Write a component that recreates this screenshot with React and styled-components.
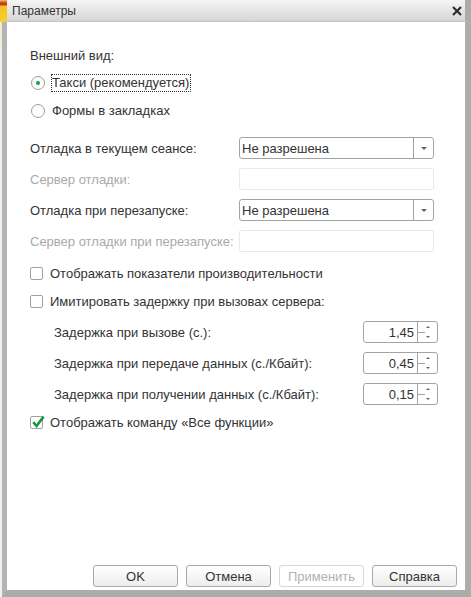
import React from 'react';
import styled, { createGlobalStyle } from 'styled-components';

const Global = createGlobalStyle`
  html, body { margin: 0; padding: 0; }
  body {
    width: 471px; height: 597px; overflow: hidden; background: #fff;
    font-family: "Liberation Sans", Arial, sans-serif; font-size: 13px; color: #333;
  }
  * { box-sizing: border-box; }
`;

const Screen = styled.div`
  width: 471px; height: 597px; display: flex; flex-direction: column;
`;
const TitleRow = styled.div`
  display: flex; height: 22px; flex: none;
`;
const DesktopPeek = styled.div`
  width: 7px;
  background: linear-gradient(180deg, #e9d046 0, #c9362a 3px, #c9362a 5px, #f3c41c 6px, #f6cf34 100%);
`;
const TitleBar = styled.div`
  flex: 1; display: flex; align-items: center; justify-content: space-between;
  padding: 0 3px 0 5px;
  background: linear-gradient(#f6f6f6, #d5d5d5);
  border-bottom: 1px solid #c4c4c4;
  border-right: 6px solid #acacac;
  font-size: 12px; color: #333;
`;
const CloseIcon = styled.svg`
  width: 10px; height: 10px; display: block;
`;
const BodyRow = styled.div`
  flex: 1; display: flex; min-height: 0;
`;
const Gutter = styled.div`
  width: 2px; background: linear-gradient(#f3e9c8, #f1f1f1 40px, #f1f1f1);
`;
const Window = styled.div`
  flex: 1; display: flex; flex-direction: column;
  background: #fff;
  border-left: 5px solid #b4b4b4;
  border-right: 6px solid #acacac;
  border-bottom: 7px solid #acacac;
  padding: 19px 8px 3px 23px;
`;
const Heading = styled.div`
  height: 28px; display: flex; align-items: center;
`;
const RadioRow = styled.div`
  height: 28px; display: flex; align-items: center; gap: 6px; padding-left: 1px;
`;
const RadioCircle = styled.span`
  width: 14px; height: 14px; border-radius: 50%;
  border: 1px solid #9e9e9e;
  background: linear-gradient(#fafafa, #fff);
  display: grid; place-items: center;
`;
const RadioDot = styled.span`
  width: 4px; height: 4px; border-radius: 50%; background: #1f9a48;
`;
const RadioLabel = styled.span`
  line-height: 16px; padding: 0 1px 0 0;
  border: 1px dotted ${p => (p.$focused ? '#333' : 'transparent')};
`;
const FieldsGrid = styled.div`
  margin-top: 12px;
  display: grid; grid-template-columns: 209px 195px;
  grid-auto-rows: 22px; row-gap: 9px; align-items: center;
`;
const FieldLabel = styled.span`
  color: ${p => (p.$muted ? '#a9a9a9' : '#333')};
`;
const Select = styled.div`
  height: 22px; display: flex; border: 1px solid #a4a4a4; border-radius: 3px;
`;
const SelectValue = styled.span`
  flex: 1; display: flex; align-items: center; padding-left: 2px;
`;
const SelectButton = styled.span`
  width: 20px; border-left: 1px solid #a4a4a4;
  display: grid; place-items: center;
  &::after {
    content: ''; border-left: 3px solid transparent; border-right: 3px solid transparent;
    border-top: 3px solid #666;
  }
`;
const TextInput = styled.div`
  height: 22px; border: 1px solid #e9e9e9; border-radius: 2px;
`;
const CheckRow = styled.div`
  height: 28px; display: flex; align-items: center; gap: 7px;
  margin-top: ${p => p.$mt || 0}px;
`;
const CheckBox = styled.span`
  position: relative; width: 13px; height: 13px;
  border: 1px solid #a0a0a0; border-radius: 2px; background: #fff;
`;
const CheckMark = styled.svg`
  position: absolute; left: 0px; top: -3px; width: 15px; height: 15px; overflow: visible;
`;
const DelayList = styled.div`
  margin-top: 6px; width: 408px; padding-left: 24px;
  display: grid; grid-auto-rows: 22px; row-gap: 9px;
`;
const DelayRow = styled.div`
  display: flex; align-items: center; justify-content: space-between;
`;
const Spinner = styled.div`
  width: 75px; height: 22px; display: flex;
  border: 1px solid #a4a4a4; border-radius: 3px;
`;
const SpinValue = styled.span`
  flex: 1; display: flex; align-items: center; justify-content: flex-end; padding-right: 3px;
`;
const SpinButtons = styled.span`
  position: relative; width: 20px; border-left: 1px solid #a4a4a4;
  display: flex; flex-direction: column;
  &::before {
    content: ''; position: absolute; left: 0; top: 50%; width: 7px; height: 1px; background: #a4a4a4;
  }
`;
const SpinArrow = styled.span`
  flex: 1; display: grid; place-items: center;
  &::after {
    content: ''; border-left: 2px solid transparent; border-right: 2px solid transparent;
    ${p => (p.$up ? 'border-bottom: 2px solid #666;' : 'border-top: 2px solid #666;')}
  }
`;
const Spacer = styled.div`
  flex: 1;
`;
const ButtonBar = styled.div`
  display: flex; justify-content: flex-end; gap: 8px;
`;
const Button = styled.button`
  width: 85px; height: 22px; padding: 0;
  font-family: "Liberation Sans", Arial, sans-serif; font-size: 13px;
  color: ${p => (p.disabled ? '#b2b2b2' : '#333')};
  border: 1px solid ${p => (p.disabled ? '#d8d8d8' : '#a9a9a9')};
  border-radius: 3px;
  background: ${p => (p.disabled ? '#fff' : 'linear-gradient(#ffffff, #ededed)')};
`;

const fields = [
  { label: 'Отладка в текущем сеансе:', select: 'Не разрешена' },
  { label: 'Сервер отладки:', muted: true },
  { label: 'Отладка при перезапуске:', select: 'Не разрешена' },
  { label: 'Сервер отладки при перезапуске:', muted: true },
];

const delays = [
  { label: 'Задержка при вызове (с.):', value: '1,45' },
  { label: 'Задержка при передаче данных (с./Кбайт):', value: '0,45' },
  { label: 'Задержка при получении данных (с./Кбайт):', value: '0,15' },
];

export default function App() {
  return (
    <Screen>
      <Global />
      <TitleRow>
        <DesktopPeek />
        <TitleBar>
          <span>Параметры</span>
          <CloseIcon viewBox="0 0 10 10">
            <path d="M1 1 L9 9 M9 1 L1 9" stroke="#2e2e2e" strokeWidth="2.2" fill="none" />
          </CloseIcon>
        </TitleBar>
      </TitleRow>
      <BodyRow>
        <Gutter />
        <Window>
          <Heading>Внешний вид:</Heading>
          <RadioRow>
            <RadioCircle><RadioDot /></RadioCircle>
            <RadioLabel $focused>Такси (рекомендуется)</RadioLabel>
          </RadioRow>
          <RadioRow>
            <RadioCircle />
            <RadioLabel>Формы в закладках</RadioLabel>
          </RadioRow>
          <FieldsGrid>
            {fields.map(f => (
              <React.Fragment key={f.label}>
                <FieldLabel $muted={f.muted}>{f.label}</FieldLabel>
                {f.select ? (
                  <Select>
                    <SelectValue>{f.select}</SelectValue>
                    <SelectButton />
                  </Select>
                ) : (
                  <TextInput />
                )}
              </React.Fragment>
            ))}
          </FieldsGrid>
          <CheckRow $mt={7}>
            <CheckBox />
            <span>Отображать показатели производительности</span>
          </CheckRow>
          <CheckRow>
            <CheckBox />
            <span>Имитировать задержку при вызовах сервера:</span>
          </CheckRow>
          <DelayList>
            {delays.map(d => (
              <DelayRow key={d.label}>
                <span>{d.label}</span>
                <Spinner>
                  <SpinValue>{d.value}</SpinValue>
                  <SpinButtons>
                    <SpinArrow $up />
                    <SpinArrow />
                  </SpinButtons>
                </Spinner>
              </DelayRow>
            ))}
          </DelayList>
          <CheckRow $mt={3}>
            <CheckBox>
              <CheckMark viewBox="0 0 15 15">
                <path d="M2.2 8.2 L5.6 12 L12.6 2.6" stroke="#16963f" strokeWidth="2.6" fill="none" />
              </CheckMark>
            </CheckBox>
            <span>Отображать команду «Все функции»</span>
          </CheckRow>
          <Spacer />
          <ButtonBar>
            <Button>OK</Button>
            <Button>Отмена</Button>
            <Button disabled>Применить</Button>
            <Button>Справка</Button>
          </ButtonBar>
        </Window>
      </BodyRow>
    </Screen>
  );
}
